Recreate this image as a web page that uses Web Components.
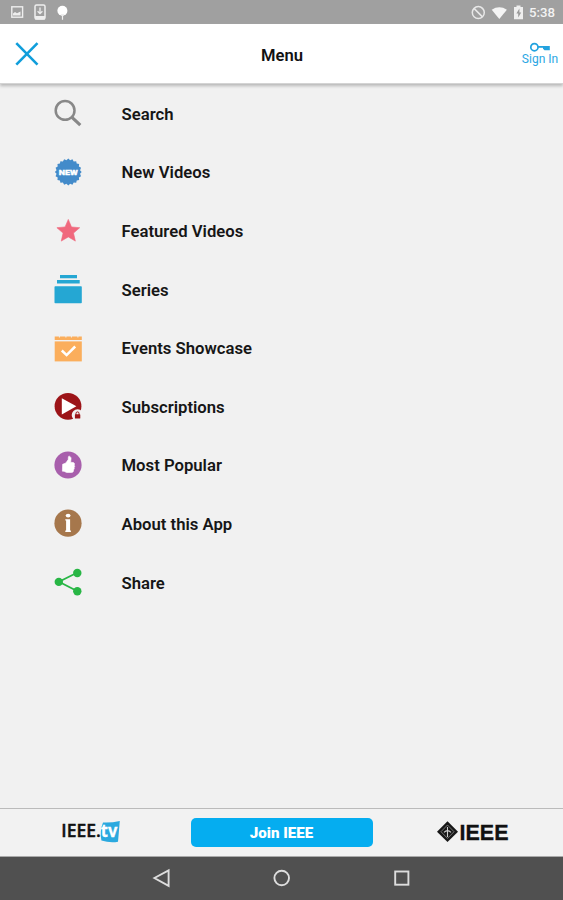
<!DOCTYPE html>
<html lang="en">
<head>
<meta charset="utf-8">
<title>Menu</title>
<style>
html, body { margin: 0; height: 100%; }
body { font-family: Roboto, "Liberation Sans", sans-serif; overflow: hidden; }
</style>
</head>
<body>
<menu-screen></menu-screen>
<script>
const define = (name, html) => {
  const tpl = document.createElement('template');
  tpl.innerHTML = html;
  customElements.define(name, class extends HTMLElement {
    constructor() {
      super();
      this.attachShadow({ mode: 'open' }).append(tpl.content.cloneNode(true));
    }
  });
};

const points = (n, outer, inner, cx, cy) => Array.from({ length: n * 2 }, (_, i) => {
  const r = i % 2 ? inner : outer, a = Math.PI * i / n - Math.PI / 2;
  return (cx + r * Math.cos(a)).toFixed(2) + ',' + (cy + r * Math.sin(a)).toFixed(2);
}).join(' ');

const ICONS = {
  search: '<g fill="none" stroke="#888"><circle cx="-2.9" cy="-3.6" r="9.4" stroke-width="2.5"/><path d="M4 3.4L12.3 11.2" stroke-width="3.2"/></g>',
  fresh: `<polygon points="${points(20, 13.4, 11.9, .3, -1)}" fill="#438bca"/><text x=".3" y="1.6" text-anchor="middle" textLength="19" lengthAdjust="spacingAndGlyphs" font-family="Roboto, sans-serif" font-weight="900" font-size="7.4" fill="#fff" stroke="#fff" stroke-width=".3">NEW</text>`,
  star: `<polygon points="${points(5, 12, 5.5, .3, .4)}" fill="#f0687d" stroke="#f0687d" stroke-width=".6" stroke-linejoin="round"/>`,
  series: '<g fill="#25a7d3"><path d="M-8-15H9v3.2H-8zM-11-10H11.7v3.6H-11z"/><rect x="-13.5" y="-3.8" width="27.3" height="17" rx=".8"/></g>',
  events: '<g fill="#fbae5c"><path d="M-13.3-12.5h4.2v1h1v-1h5.5v1h1v-1h4.5v1h1v-1h5.5v1h1v-1h3.4v3.4h-27.1z"/><path d="M-13.3-7.6H13.8V12.4H-13.3z"/></g><path d="M-6.2 1.5L-1.4 6.1 7.2-2.5" fill="none" stroke="#fff" stroke-width="2.5"/>',
  subs: '<circle cy="-.7" r="13.4" fill="#9c1418"/><path d="M-6.2-8.8L8.4-.8-6.2 7.4z" fill="#fff"/><circle cx="9.6" cy="8.1" r="5.9" fill="#f2f1f1"/><path d="M8 8V6.4a1.5 1.5 0 0 1 3 0V8" fill="none" stroke="#9c1418" stroke-width="1"/><rect x="6.9" y="7.3" width="5.4" height="4.2" rx=".6" fill="#9c1418"/>',
  popular: '<circle cy="-1" r="13.6" fill="#a85fac"/><path d="M-5.4-1.7L-2.2-3 .2-6.4.4-9.3C.8-10.5 3-9.6 3.1-7.4L2.6-3.8 5.4-3.4C6.8-3 6.6-1.4 6.2-.8 7 0 6.8 1 6 1.7 6.6 2.6 6.2 3.5 5.4 4 5.8 5.4 5 6.4 3.6 6.5H-1.4L-4 5.3-5.6 5.2z" fill="#fff" stroke="#fff" stroke-width=".6" stroke-linejoin="round"/>',
  info: '<circle cy="-.8" r="13.6" fill="#a6774c"/><g fill="#fff"><ellipse cx=".1" cy="-8.4" rx="2.4" ry="1.9"/><path d="M-2.7-4.8H2.1V6.6H2.9V8.1H-2.7V6.6H-1.9V-3.4h-.8z"/></g>',
  share: '<path d="M9-10.2L-9-1.2 9 8" fill="none" stroke="#28b645" stroke-width="1.8"/><g fill="#28b645"><circle cx="9.3" cy="-10" r="4.2"/><circle cx="-9.2" cy="-1.1" r="4.2"/><circle cx="9.3" cy="8.2" r="4.2"/></g>'
};

define('status-bar', `
<style>
:host { display: flex; justify-content: space-between; height: 24px; background: #a0a0a0; color: #f3f3f3; }
svg { display: block; }
.right { display: flex; }
time { width: 34px; font-size: 13.2px; line-height: 25px; font-weight: 500; }
</style>
<svg width="80" height="24" viewBox="0 0 80 24">
  <rect x="11.8" y="6.8" width="10.8" height="10.4" fill="none" stroke="#eee" stroke-width="1.4"/>
  <path d="M13 15.5v-2l2-1.5 2 1.2 3.5-1.8v4.1z" fill="#eee"/>
  <rect x="35" y="5" width="10" height="14" rx="1.5" fill="none" stroke="#eee" stroke-width="1.5"/>
  <path d="M40 7.5v6m-2.4-2.2L40 13.7l2.4-2.4" fill="none" stroke="#eee" stroke-width="1.3"/>
  <path d="M35 16h10v3.5H35z" fill="#eee"/>
  <circle cx="62.4" cy="10.8" r="5" fill="#fff"/>
  <path d="M60.5 14h4l-1.4 2.3v3.5h-1.2v-3.5z" fill="#eee"/>
</svg>
<div class="right">
  <svg width="63" height="24" viewBox="466 0 63 24">
    <circle cx="478.3" cy="12.6" r="6" fill="none" stroke="#e8e8e8" stroke-width="1.5"/>
    <path d="M474 8.4l8.5 8.5" stroke="#e8e8e8" stroke-width="1.5"/>
    <path d="M491.7 9.7q7.6-4.8 15.2 0L499.3 19z" fill="#f4f4f4"/>
    <path d="M514 7h2.5V5.5h4V7h2.5v12.2h-9z" fill="#eee"/>
    <path d="M519.4 8.6l-3 5h1.8v4l3-5.2h-1.8z" fill="#999"/>
  </svg>
  <time>5:38</time>
</div>`);

define('app-header', `
<style>
:host { display: grid; grid-template-columns: 60px 1fr 60px; align-items: center; height: 59px; background: #fff; border-bottom: 1px solid #d4d4d4; box-shadow: 0 2px 3px #b8b8b8; position: relative; }
svg { display: block; }
h1 { margin: 4px 0 0 1px; font-size: 16.6px; line-height: 20px; font-weight: 600; text-align: center; color: #111; }
.sign { display: flex; flex-direction: column; align-items: center; margin: 1px -14px 0 0; color: #2ba6e3; font-size: 12px; line-height: 13px; white-space: nowrap; }
</style>
<svg width="60" height="59" viewBox="0 24 60 59"><path d="M16.3 43.2L37.5 64.6M37.5 43.2L16.3 64.6" stroke="#109edb" stroke-width="2.6"/></svg>
<h1>Menu</h1>
<div class="sign">
  <svg width="22" height="11" viewBox="0 0 22 11"><circle cx="5.4" cy="5.2" r="3.6" fill="none" stroke="#22a2df" stroke-width="1.7"/><path d="M9 4.9h6" stroke="#22a2df" stroke-width="1.8"/><path d="M14 4h6.8v4.2H15.5L14 6.8z" fill="#22a2df"/></svg>
  <span>Sign In</span>
</div>`);

customElements.define('menu-item', class extends HTMLElement {
  constructor() {
    super();
    this.attachShadow({ mode: 'open' });
  }
  connectedCallback() {
    this.shadowRoot.innerHTML = `
<style>
:host { display: flex; align-items: center; gap: 35.5px; height: 58.6px; padding-left: 50px; font-size: 16.7px; font-weight: 600; color: #161616; }
svg { flex: none; }
</style>
<svg width="36" height="36" viewBox="-18 -18 36 36">${ICONS[this.getAttribute('icon')]}</svg>
<span><slot></slot></span>`;
  }
});

define('join-button', `
<style>
:host { display: block; }
button { display: block; width: 182px; height: 29px; padding: 0; border: 0; border-radius: 5px; background: #05adf0; color: #fff; font: 900 15.1px/30px Roboto, "Liberation Sans", sans-serif; text-align: center; }
</style>
<button><slot></slot></button>`);

define('brand-bar', `
<style>
:host { display: grid; grid-template-columns: 1fr 182px 1fr; align-items: center; height: 47px; border-top: 1px solid #bbb; background: #f2f2f2; }
svg { display: block; }
</style>
<svg width="190" height="47" viewBox="0 809 190 47">
  <text x="61.3" y="837.3" font-family="Open Sans, Noto Sans, sans-serif" font-weight="600" font-size="17.4" textLength="39.5" lengthAdjust="spacingAndGlyphs" fill="#111" stroke="#111" stroke-width=".4">IEEE.</text>
  <path d="M103 822.5Q111 823 119.8 821L118 841.8Q110 843.3 101.4 840.5 99.5 831 103 822.5z" fill="#2ba9df"/>
  <text x="100.8" y="837.4" font-family="Open Sans, Noto Sans, sans-serif" font-weight="700" font-size="18" textLength="16.5" lengthAdjust="spacingAndGlyphs" fill="#fff" stroke="#fff" stroke-width=".3">tv</text>
</svg>
<join-button>Join IEEE</join-button>
<svg width="190" height="47" viewBox="373 809 190 47">
  <path d="M447.5 821.3L458 831.7 447.5 842 437 831.7z" fill="#171717"/>
  <path d="M447.5 825L454 831.7 447.5 838.4 441 831.7z" fill="none" stroke="#999" stroke-width=".7"/>
  <path d="M447.5 827v10M444 832.4q3.5-3.6 7 0" fill="none" stroke="#ccc" stroke-width="1.1"/>
  <text x="459.5" y="839.5" font-family="Liberation Sans, Arial, sans-serif" font-weight="700" font-size="21.6" textLength="49" lengthAdjust="spacingAndGlyphs" fill="#111" stroke="#111" stroke-width=".3">IEEE</text>
</svg>`);

define('nav-bar', `
<style>
:host { display: grid; place-items: center; height: 43px; border-top: 1px solid #aaa; background: #505050; }
</style>
<svg width="563" height="43" viewBox="0 857 563 43" fill="none" stroke="#ddd" stroke-width="1.9">
  <path d="M154.4 878L168.6 870.3V885.8z"/>
  <circle cx="281.7" cy="878" r="7.3"/>
  <rect x="395.2" y="871.5" width="13.2" height="13.2"/>
</svg>`);

define('menu-screen', `
<style>
:host { display: flex; flex-direction: column; height: 900px; background: #f1f1f1; }
nav { flex: 1; padding-top: 1px; }
</style>
<status-bar></status-bar>
<app-header></app-header>
<nav>
  <menu-item icon="search">Search</menu-item>
  <menu-item icon="fresh">New Videos</menu-item>
  <menu-item icon="star">Featured Videos</menu-item>
  <menu-item icon="series">Series</menu-item>
  <menu-item icon="events">Events Showcase</menu-item>
  <menu-item icon="subs">Subscriptions</menu-item>
  <menu-item icon="popular">Most Popular</menu-item>
  <menu-item icon="info">About this App</menu-item>
  <menu-item icon="share">Share</menu-item>
</nav>
<brand-bar></brand-bar>
<nav-bar></nav-bar>`);
</script>
</body>
</html>
